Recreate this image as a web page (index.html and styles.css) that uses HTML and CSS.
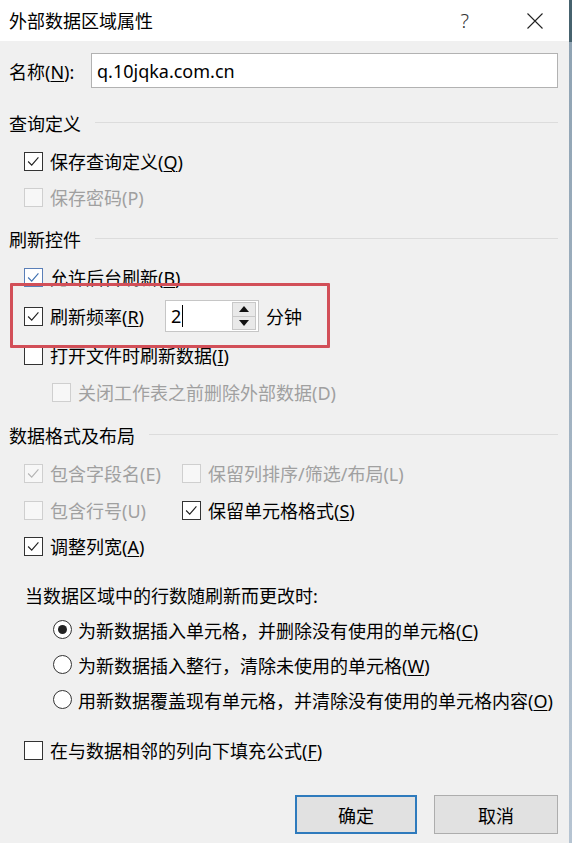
FILE: index.html
```html
<!DOCTYPE html>
<html lang="zh-CN">
<head>
<meta charset="utf-8">
<title>外部数据区域属性</title>
<link rel="stylesheet" href="styles.css">
</head>
<body>
<div class="window">
  <div class="dialog">
    <div class="titlebar">
      <span class="title">外部数据区域属性</span>
      <span class="help">?</span>
      <svg class="close" width="16" height="16" viewBox="0 0 16 16"><path d="M0.5 0.5 L15.5 15.5 M15.5 0.5 L0.5 15.5" stroke="#222" stroke-width="1.1" fill="none"/></svg>
    </div>
    <div class="content">
      <div class="name-row">
        <span class="name-label">名称(<u>N</u>):</span>
        <div class="textbox">q.10jqka.com.cn</div>
      </div>

      <div class="group-title g1"><span>查询定义</span></div>
      <div class="row r-q"><span class="cb checked"><svg viewBox="0 0 19 19"><path d="M3.5 9.5 L7.5 13.5 L15 5" /></svg></span><span class="lbl">保存查询定义(<u>Q</u>)</span></div>
      <div class="row r-p disabled"><span class="cb"></span><span class="lbl">保存密码(P)</span></div>

      <div class="group-title g2"><span>刷新控件</span></div>
      <div class="row r-b"><span class="cb checked hover"><svg viewBox="0 0 19 19"><path d="M3.5 9.5 L7.5 13.5 L15 5" /></svg></span><span class="lbl">允许后台刷新(<u>B</u>)</span></div>
      <div class="row r-r highlight">
        <span class="cb checked"><svg viewBox="0 0 19 19"><path d="M3.5 9.5 L7.5 13.5 L15 5" /></svg></span><span class="lbl">刷新频率(<u>R</u>)</span>
        <div class="spin">
          <span class="spin-value">2<span class="caret"></span></span>
          <div class="spin-btns">
            <span class="spin-btn"><svg width="10" height="6" viewBox="0 0 10 6"><path d="M5 0 L10 6 L0 6 Z" fill="#111"/></svg></span>
            <span class="spin-btn"><svg width="10" height="6" viewBox="0 0 10 6"><path d="M0 0 L10 0 L5 6 Z" fill="#111"/></svg></span>
          </div>
        </div>
        <span class="unit">分钟</span>
      </div>
      <div class="row r-i"><span class="cb"></span><span class="lbl">打开文件时刷新数据(<u>I</u>)</span></div>
      <div class="row r-d disabled sub"><span class="cb"></span><span class="lbl">关闭工作表之前删除外部数据(D)</span></div>

      <div class="group-title g3"><span>数据格式及布局</span></div>
      <div class="row two r-e">
        <div class="cell disabled"><span class="cb checked"><svg viewBox="0 0 19 19"><path d="M3.5 9.5 L7.5 13.5 L15 5" /></svg></span><span class="lbl">包含字段名(E)</span></div>
        <div class="cell disabled"><span class="cb"></span><span class="lbl">保留列排序/筛选/布局(L)</span></div>
      </div>
      <div class="row two r-u">
        <div class="cell disabled"><span class="cb"></span><span class="lbl">包含行号(U)</span></div>
        <div class="cell"><span class="cb checked"><svg viewBox="0 0 19 19"><path d="M3.5 9.5 L7.5 13.5 L15 5" /></svg></span><span class="lbl">保留单元格格式(<u>S</u>)</span></div>
      </div>
      <div class="row r-a"><span class="cb checked"><svg viewBox="0 0 19 19"><path d="M3.5 9.5 L7.5 13.5 L15 5" /></svg></span><span class="lbl">调整列宽(<u>A</u>)</span></div>

      <div class="row caption">当数据区域中的行数随刷新而更改时:</div>
      <div class="row radio-row r1"><span class="radio selected"></span><span class="lbl">为新数据插入单元格，并删除没有使用的单元格(<u>C</u>)</span></div>
      <div class="row radio-row"><span class="radio"></span><span class="lbl">为新数据插入整行，清除未使用的单元格(<u>W</u>)</span></div>
      <div class="row radio-row"><span class="radio"></span><span class="lbl">用新数据覆盖现有单元格，并清除没有使用的单元格内容(<u>O</u>)</span></div>

      <div class="row r-f"><span class="cb"></span><span class="lbl">在与数据相邻的列向下填充公式(<u>F</u>)</span></div>

      <div class="buttons">
        <button class="btn default">确定</button>
        <button class="btn">取消</button>
      </div>
    </div>
  </div>
  <div class="edge"></div>
</div>
</body>
</html>
```

FILE: styles.css
```css
* { box-sizing: border-box; }

html, body {
  margin: 0;
  padding: 0;
  width: 572px;
  height: 843px;
  overflow: hidden;
  background: #f0f0f0;
}

body {
  font-family: "Noto Sans", "Noto Sans CJK SC", sans-serif;
  font-size: 18px;
  color: #000;
}

u { text-decoration: underline; text-underline-offset: 2px; text-decoration-thickness: 1px; }

.window {
  display: flex;
  width: 572px;
  height: 843px;
}

.dialog {
  flex: 1;
  background: #f0f0f0;
  display: flex;
  flex-direction: column;
}

.edge {
  width: 3px;
  background: linear-gradient(#46626e 0, #46626e 42px, #8fa3b3 42px, #b6c4d2 100%);
}

.titlebar {
  height: 41px;
  background: #fff;
  display: flex;
  align-items: center;
  padding: 0 26px 0 9px;
}

.title { line-height: 1; }

.help {
  margin-left: auto;
  margin-right: 58px;
  font-size: 20px;
  font-weight: 300;
  color: #333;
  line-height: 1;
}

.close { display: block; }

.content {
  padding: 0 11px 0 9px;
  display: flex;
  flex-direction: column;
}

.name-row {
  margin-top: 12px;
  height: 35px;
  display: flex;
  align-items: center;
}

.name-label { width: 82px; }

.textbox {
  flex: 1;
  height: 35px;
  background: #fff;
  border: 1px solid #b2b2b2;
  padding-left: 5px;
  display: flex;
  align-items: center;
}

.group-title {
  height: 36px;
  display: flex;
  align-items: center;
}

.group-title::after {
  content: "";
  flex: 1;
  height: 1px;
  background: #dcdcdc;
  margin-left: 14px;
  margin-top: -2px;
}

.g1 { margin-top: 17px; }
.g2 { margin-top: 6px; }
.g3 { margin-top: 7px; }

.row {
  height: 36px;
  display: flex;
  align-items: center;
  padding-left: 15px;
}

.r-q { margin-top: 2px; }
.r-b { margin-top: 2px; }
.r-r { margin-top: 3px; }
.r-i { margin-top: 3px; }
.r-d { margin-top: 1px; }
.r-e { margin-top: 2px; }
.r-u { margin-top: 1px; }
.r-f { margin-top: 15px; }

.sub { padding-left: 43px; }

.cb {
  width: 19px;
  height: 19px;
  flex: none;
  border: 1px solid #333;
  background: #fff;
  margin-right: 7px;
  display: flex;
}

.cb svg { width: 17px; height: 17px; }
.cb svg path { stroke: #222; stroke-width: 1.3; fill: none; }

.cb.hover { border-color: #5a7fb8; }
.cb.hover svg path { stroke: #3f70b0; }

.disabled { color: #a0a0a0; }
.disabled .cb { border-color: #cfcfcf; background: #f7f7f7; }
.disabled .cb svg path { stroke: #b4b4b4; }

.two {
  display: grid;
  grid-template-columns: 158px auto;
}

.cell { display: flex; align-items: center; }

.highlight { position: relative; }
.highlight::after {
  content: "";
  position: absolute;
  left: 1px;
  top: -15px;
  width: 314px;
  height: 59px;
  border: 3px solid #d24f58;
  border-radius: 1px;
  pointer-events: none;
}

.spin {
  margin-left: 21px;
  width: 94px;
  height: 32px;
  background: #fff;
  border: 1px solid #c6c6c6;
  display: flex;
  align-items: center;
  justify-content: space-between;
  padding: 1px 2px 1px 5px;
}

.spin-value { display: flex; align-items: center; }

.caret {
  display: inline-block;
  width: 1px;
  height: 22px;
  background: #000;
  margin-left: 1px;
}

.spin-btns {
  display: flex;
  flex-direction: column;
  height: 100%;
  width: 24px;
}

.spin-btn {
  flex: 1;
  display: flex;
  align-items: center;
  justify-content: center;
  background: #e9e9e9;
  border: 1px solid #c8c8c8;
}

.spin-btn + .spin-btn { border-top: none; }

.unit { margin-left: 7px; }

.caption {
  margin-top: 15px;
  height: 32px;
  padding-left: 16px;
}

.radio-row { height: 35px; padding-left: 44px; }
.r1 { margin-top: 1px; }

.radio {
  width: 19px;
  height: 19px;
  flex: none;
  border: 1px solid #333;
  border-radius: 50%;
  background: #fff;
  margin-right: 6px;
  display: flex;
  align-items: center;
  justify-content: center;
}

.radio.selected::after {
  content: "";
  width: 9px;
  height: 9px;
  border-radius: 50%;
  background: #222;
}

.buttons {
  margin-top: 27px;
  display: flex;
  justify-content: flex-end;
  gap: 17px;
}

.btn {
  width: 124px;
  height: 39px;
  font-family: inherit;
  font-size: 18px;
  color: #000;
  background: #e1e1e1;
  border: 1px solid #adadad;
  padding: 0;
}

.btn.default {
  width: 122px;
  border: 2px solid #2f7bbd;
}
```
